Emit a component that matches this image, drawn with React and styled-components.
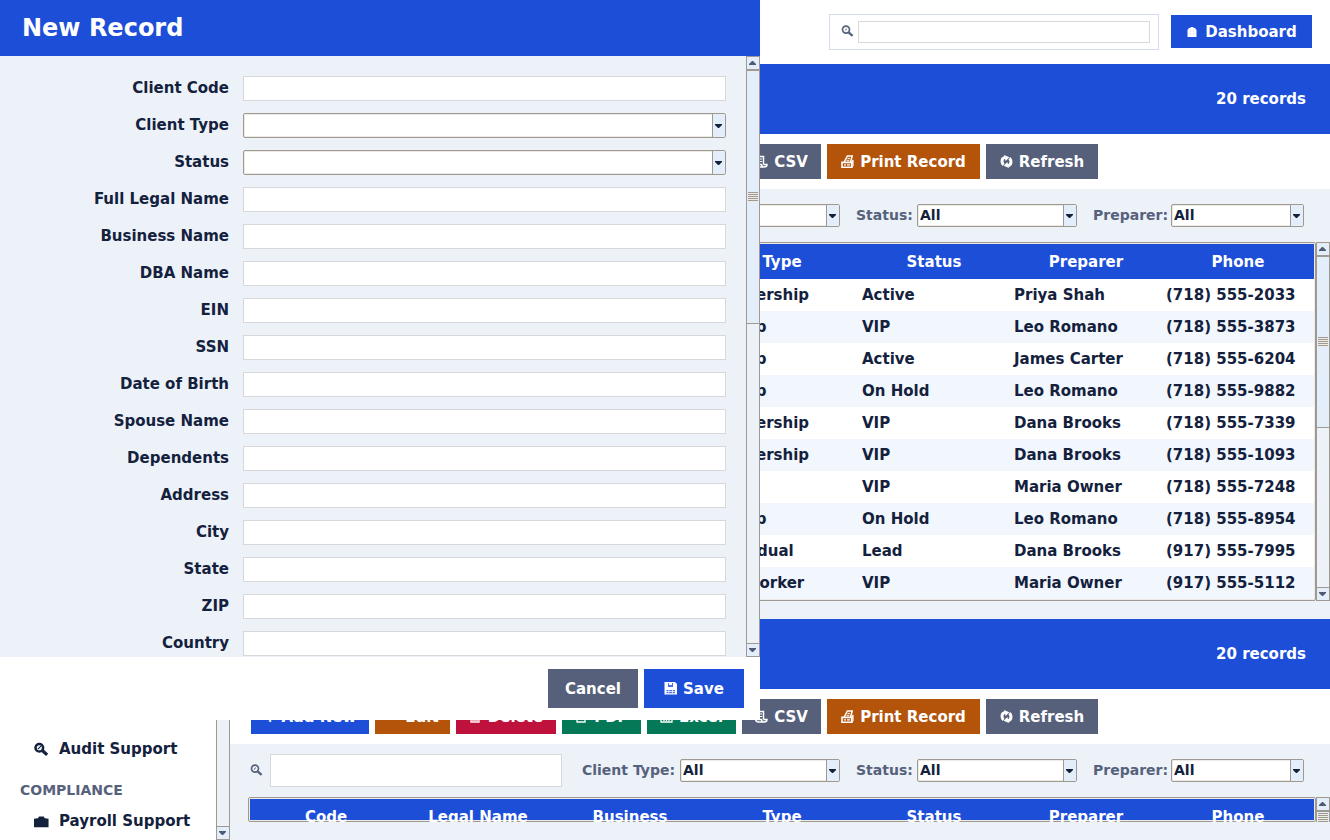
import React from 'react';
import styled, { createGlobalStyle, css } from 'styled-components';

const c = {
  blue: '#1d4ed8', slate: '#56607a', orange: '#b4530a', red: '#be123c', green: '#047857',
  pale: '#edf2f9', ink: '#14213d', muted: '#56617c', edge: '#9e9a91', light: '#eeebe7',
  field: '#d6d8dc', thumb: '#e4edfa', stripe: '#f2f6fd',
};

const Global = createGlobalStyle`
  *, *::before { box-sizing: border-box; }
  body { margin: 0; background: ${c.pale}; color: ${c.ink}; font: bold 15px/20px "DejaVu Sans", sans-serif; }
  button, input, select { font: inherit; color: inherit; margin: 0; border-radius: 0; }
`;

const Page = styled.div`
  display: flex;
  height: 100vh;
  overflow: hidden;
`;

const Sidebar = styled.nav`
  display: flex;
  width: 230px;
  flex: none;
  background: #fff;
`;
const NavList = styled.div`
  flex: 1;
  display: flex;
  flex-direction: column;
  justify-content: flex-end;
`;
const NavItem = styled.a`
  display: flex;
  align-items: center;
  gap: 10px;
  height: 38px;
  padding-left: 34px;
  color: inherit;
  text-decoration: none;
`;
const NavHeading = styled.div`
  padding: 12px 20px 2px;
  font-size: 14px;
  color: ${c.muted};
`;

const Main = styled.main`
  flex: 1;
  min-width: 0;
  display: flex;
  flex-direction: column;
`;
const TopBar = styled.header`
  flex: none;
  display: flex;
  align-items: center;
  justify-content: flex-end;
  gap: 12px;
  height: 64px;
  padding: 0 18px 1px 0;
  background: #fff;
`;
const SearchBox = styled.label`
  display: flex;
  align-items: center;
  gap: 4px;
  width: 330px;
  height: 36px;
  padding: 0 8px 0 11px;
  border: 1px solid #d5dcef;
  color: ${c.muted};
`;
const TextInput = styled.input`
  flex: 1;
  min-width: 0;
  height: ${(p) => p.$h || 25}px;
  padding: 0 4px;
  border: 1px solid ${c.field};
  background: #fff;
`;
const Button = styled.button`
  display: flex;
  align-items: center;
  justify-content: center;
  gap: 6px;
  height: ${(p) => p.$h || 35}px;
  width: ${(p) => p.$w}px;
  padding: 0;
  border: 0;
  background: ${(p) => c[p.$tone]};
  color: #fff;
  white-space: nowrap;
`;

const Section = styled.section`
  display: flex;
  flex-direction: column;
  flex: ${(p) => (p.$fill ? '1 1 0' : 'none')};
  min-height: 0;
  padding-bottom: 18px;
`;
const Banner = styled.div`
  flex: none;
  display: flex;
  align-items: center;
  justify-content: flex-end;
  height: 70px;
  padding-right: 24px;
  background: ${c.blue};
  color: #fff;
`;
const Toolbar = styled.div`
  flex: none;
  display: flex;
  gap: 6px;
  padding: 10px 21px;
  background: #fff;
`;
const Filters = styled.div`
  flex: none;
  display: flex;
  align-items: center;
  height: 53px;
  padding: 0 26px 0 20px;
  font-size: 14px;
  color: ${c.muted};
`;
const FilterSearch = styled.label`
  display: flex;
  align-items: center;
  gap: 7px;
  flex: 1;
`;
const Filter = styled.label`
  display: flex;
  align-items: center;
  margin-left: ${(p) => p.$gap || 16}px;
`;
const FilterName = styled.span`
  width: ${(p) => p.$w}px;
  padding-bottom: 2px;
  white-space: nowrap;
`;

const SelectFrame = styled.span`
  position: relative;
  display: flex;
  flex: ${(p) => (p.$w ? 'none' : '1')};
  width: ${(p) => (p.$w ? p.$w + 'px' : 'auto')};
  height: ${(p) => p.$h}px;
  border: 1px solid ${c.edge};
  border-radius: 2px;
  background: #fff;
  box-shadow: inset 0 0 0 1px ${c.light};
`;
const NativeSelect = styled.select`
  flex: 1;
  min-width: 0;
  appearance: none;
  border: 0;
  padding: 0 16px 2px 2px;
  background: transparent;
  color: ${c.ink};
`;
const SelectArrow = styled.span`
  position: absolute;
  right: 0;
  top: 0;
  bottom: 0;
  width: 13px;
  display: flex;
  align-items: center;
  justify-content: center;
  border-left: 1px solid ${c.edge};
  background: ${c.thumb};
  color: ${c.ink};
  pointer-events: none;
`;

const TableRow = styled.div`
  display: flex;
  flex: 1 1 auto;
  min-height: 0;
  padding-left: 18px;
`;
const TableFrame = styled.div`
  position: relative;
  flex: 1;
  min-width: 0;
  padding: 2px;
  overflow: hidden;
  &::before {
    content: '';
    position: absolute;
    inset: 0;
    z-index: 1;
    border: 1px solid ${c.edge};
    border-radius: 2px;
    box-shadow: inset 0 0 0 1px ${c.light};
    pointer-events: none;
  }
`;
const Table = styled.table`
  width: 100%;
  table-layout: fixed;
  border-collapse: collapse;
  background: #fff;
  white-space: nowrap;
`;
const Th = styled.th`
  height: 35px;
  padding: 0;
  background: ${c.blue};
  color: #fff;
  font-weight: bold;
  span { position: relative; z-index: 2; }
`;
const Tr = styled.tr`
  background: ${(p) => (p.$odd ? c.stripe : '#fff')};
`;
const Td = styled.td`
  height: 32px;
  padding: 0 0 0 4px;
`;

const Track = styled.div`
  flex: none;
  display: flex;
  flex-direction: column;
  width: 14px;
  overflow: hidden;
  border: 1px solid ${c.edge};
  border-top-width: ${(p) => (p.$openTop ? 0 : 1)}px;
  border-bottom-width: ${(p) => (p.$openBottom ? 0 : 1)}px;
  background: ${c.pale};
`;
const Arrow = styled.div`
  flex: none;
  display: flex;
  align-items: center;
  justify-content: center;
  height: 13px;
  background: ${c.thumb};
  color: #4d5a75;
  border: 0 solid ${c.edge};
  ${(p) => (p.$down ? css`border-top-width: 1px; margin-top: auto;` : css`border-bottom-width: 1px;`)}
`;
const Thumb = styled.div`
  flex: 0 1 ${(p) => p.$size};
  display: flex;
  align-items: center;
  min-height: ${(p) => p.$min || 0}px;
  border: solid ${c.edge};
  border-width: 1px 0;
  background: ${c.thumb};
`;
const Grip = styled.div`
  flex: 1;
  height: 10px;
  margin: 0 1px;
  background: repeating-linear-gradient(${c.edge} 0 1px, ${c.light} 1px 2px);
`;

const Dialog = styled.div`
  position: fixed;
  left: 0;
  top: 0;
  z-index: 10;
  display: flex;
  flex-direction: column;
  width: 760px;
  height: 720px;
  background: #fff;
`;
const DialogTitle = styled.h1`
  flex: none;
  margin: 0;
  padding: 0 22px;
  background: ${c.blue};
  color: #fff;
  font-size: 24px;
  line-height: 56px;
`;
const DialogBody = styled.div`
  flex: 1;
  min-height: 0;
  display: flex;
  background: ${c.pale};
`;
const Form = styled.form`
  flex: 1;
  display: flex;
  flex-direction: column;
  gap: 12px;
  overflow: hidden;
  padding: 20px 20px 0 0;
`;
const Field = styled.div`
  flex: none;
  display: flex;
  gap: 14px;
  height: 25px;
  label { width: 229px; text-align: right; line-height: 25px; }
`;
const DialogFooter = styled.div`
  flex: none;
  display: flex;
  justify-content: flex-end;
  gap: 6px;
  padding: 12px 16px;
`;

const Triangle = ({ up }) => (
  <svg width="8" height="4" viewBox="0 0 8 4" aria-hidden="true">
    <path d={up ? 'M0 4V3L3 0H4L7 3V4Z' : 'M0 0H7V1L4 4H3L0 1Z'} fill="currentColor" />
  </svg>
);

const glyphs = {
  search: (
    <g fill="none" stroke="currentColor">
      <circle cx="5" cy="4.6" r="3.5" strokeWidth="1.7" />
      <path d="M3.8 5.6L6 3.6" strokeWidth="1" />
      <path d="M7.6 7.4L11.6 10.9" strokeWidth="2.3" />
    </g>
  ),
  searchBold: (
    <g fill="none" stroke="currentColor">
      <circle cx="4.6" cy="5" r="3.3" strokeWidth="2.2" />
      <path d="M3.4 6.2L6 3.6" strokeWidth="1" />
      <path d="M7.4 7.6L11.4 11.2" strokeWidth="2.8" />
    </g>
  ),
  home: (
    <g>
      <path d="M1.5 5L3 3H4.5V2H7.5V3H9L10.5 5V12H1.5Z" fill="currentColor" />
      <path d="M4 5.5H5V6.5H4ZM7 5.5H8V6.5H7ZM4 8.5H5V9.5H4ZM7 8.5H8V9.5H7Z" fill={c.blue} opacity="0.3" />
    </g>
  ),
  csv: (
    <g fill="none" stroke="currentColor" strokeWidth="1.5">
      <path d="M2.5 9V1.5H8.5V9.5" />
      <path d="M0.7 9.5H6.5Q6.8 12 9 12H3Q0.7 12 0.7 9.5Z" />
      <path d="M9 12Q12 12 12 9.5H8.5" />
      <path d="M4.3 4H7M4.3 6.5H7" strokeWidth="1" />
    </g>
  ),
  print: (
    <g fill="none" stroke="currentColor">
      <path d="M3.2 7L6.4 1H11.2L9.6 7" strokeWidth="1.5" />
      <path d="M1 7.4H10.8V12.2H1Z" strokeWidth="1.6" />
      <path d="M11 7.4L12 5V10.5L10.8 12.2" strokeWidth="1.2" />
      <path d="M3 9.8H5M6 9.8H9.2" strokeWidth="1.3" />
      <path d="M6.6 3.4H9M5.6 5.3H8.4" strokeWidth="1" />
    </g>
  ),
  refresh: (
    <g fill="none" stroke="currentColor" strokeWidth="3">
      <path d="M5 2.4Q2 3 2 6.5Q2.1 8.6 3.6 9.8" />
      <path d="M8 10.8Q11 10 11 6.5Q10.9 4.4 9.3 3.2" />
      <path d="M4 0L9.4 2.3L5.6 6ZM9 13L3.6 10.7L7.4 7Z" fill="currentColor" stroke="none" />
    </g>
  ),
  save: (
    <g>
      <path d="M0.5 0H11L13 2V12.5H0.5Z" fill="currentColor" />
      <path d="M4 1H9V5H4ZM2.5 8H11V9.2H2.5ZM2.5 10H11V11.2H2.5Z" fill={c.blue} opacity="0.8" />
      <path d="M5 1H8V3H5ZM4.5 8H5.2V11.2H4.5ZM8 8H8.7V11.2H8Z" fill="currentColor" />
    </g>
  ),
  briefcase: (<path d="M0 4.2L3.4 3.6L4.4 2.2H8.4L9.4 3.6L12.6 4.2V11.4H0Z" fill="currentColor" />),
  trash: (<g fill="none" stroke="currentColor" strokeWidth="1.3"><path d="M1 2H11M2 3V12H10V3M4 4V11M6 4V11M8 4V11M2 6H10M2 9H10" /></g>),
  page: (<g fill="none" stroke="currentColor" strokeWidth="1.3"><path d="M2 1H10V12H2ZM4 4H8M4 7H8" /></g>),
  chart: (<g fill="none" stroke="currentColor" strokeWidth="1.3"><path d="M1 1H12V12H1ZM4 11V6M6.5 11V3M9 11V7" /></g>),
};
const Icon = ({ name, size = 13 }) => (
  <svg width={size} height={size} viewBox="0 0 13 13" aria-hidden="true">{glyphs[name]}</svg>
);

function Select({ id, options = [], w, h = 25 }) {
  return (
    <SelectFrame $w={w} $h={h}>
      <NativeSelect id={id}>{options.map((o) => <option key={o}>{o}</option>)}</NativeSelect>
      <SelectArrow><Triangle /></SelectArrow>
    </SelectFrame>
  );
}

function Scrollbar({ size, min, openTop, openBottom, thumb = true, down = true }) {
  return (
    <Track $openTop={openTop} $openBottom={openBottom}>
      {!openTop && <Arrow><Triangle up /></Arrow>}
      {thumb && <Thumb $size={size} $min={min}><Grip /></Thumb>}
      {down && <Arrow $down><Triangle /></Arrow>}
    </Track>
  );
}

const actions = [
  ['+ Add New', 'blue', 118],
  ['Edit', 'orange', 75, 'blank'],
  ['Delete', 'red', 100, 'trash'],
  ['PDF', 'green', 79, 'page'],
  ['Excel', 'green', 89, 'chart'],
  ['CSV', 'slate', 79, 'csv'],
  ['Print Record', 'orange', 153, 'print'],
  ['Refresh', 'slate', 112, 'refresh'],
];
const filters = [
  ['Client Type:', 98, 160, 20],
  ['Status:', 61, 160, 16],
  ['Preparer:', 78, 133, 16],
];
const columns = ['Code', 'Legal Name', 'Business', 'Type', 'Status', 'Preparer', 'Phone'];
const records = [
  ['Partnership', 'Active', 'Priya Shah', '(718) 555-2033'],
  ['S-Corp', 'VIP', 'Leo Romano', '(718) 555-3873'],
  ['S-Corp', 'Active', 'James Carter', '(718) 555-6204'],
  ['S-Corp', 'On Hold', 'Leo Romano', '(718) 555-9882'],
  ['Partnership', 'VIP', 'Dana Brooks', '(718) 555-7339'],
  ['Partnership', 'VIP', 'Dana Brooks', '(718) 555-1093'],
  ['', 'VIP', 'Maria Owner', '(718) 555-7248'],
  ['S-Corp', 'On Hold', 'Leo Romano', '(718) 555-8954'],
  ['Individual', 'Lead', 'Dana Brooks', '(917) 555-7995'],
  ['Gig Worker', 'VIP', 'Maria Owner', '(917) 555-5112'],
];

function RecordSection({ rows, fill }) {
  return (
    <Section $fill={fill}>
      <Banner>20 records</Banner>
      <Toolbar>
        {actions.map(([label, tone, w, icon]) => (
          <Button key={label} type="button" $tone={tone} $w={w}>{icon && <Icon name={icon} />}{label}</Button>
        ))}
      </Toolbar>
      <Filters>
        <FilterSearch>
          <Icon name="search" />
          <TextInput $h={33} aria-label="Search records" />
        </FilterSearch>
        {filters.map(([label, labelWidth, w, gap]) => (
          <Filter key={label} $gap={gap}>
            <FilterName $w={labelWidth}>{label}</FilterName>
            <Select w={w} h={23} options={['All']} />
          </Filter>
        ))}
      </Filters>
      <TableRow>
        <TableFrame>
          <Table>
            <thead><tr>{columns.map((h) => <Th key={h}><span>{h}</span></Th>)}</tr></thead>
            <tbody>
              {rows.map((r, i) => (
                <Tr key={i} $odd={i % 2}><Td /><Td /><Td />{r.map((v, j) => <Td key={j}>{v}</Td>)}</Tr>
              ))}
            </tbody>
          </Table>
        </TableFrame>
        {fill ? <Scrollbar size="172px" min={13} down={false} openBottom /> : <Scrollbar size="172px" />}
      </TableRow>
    </Section>
  );
}

const fields = ['Client Code', 'Client Type', 'Status', 'Full Legal Name', 'Business Name', 'DBA Name', 'EIN', 'SSN',
  'Date of Birth', 'Spouse Name', 'Dependents', 'Address', 'City', 'State', 'ZIP', 'Country'];

function NewRecord() {
  return (
    <Dialog role="dialog" aria-labelledby="dialog-title">
      <DialogTitle id="dialog-title">New Record</DialogTitle>
      <DialogBody>
        <Form id="record-form">
          {fields.map((f) => {
            const id = f.toLowerCase().replace(/ /g, '-');
            return (
              <Field key={f}>
                <label htmlFor={id}>{f}</label>
                {f === 'Client Type' || f === 'Status' ? <Select id={id} /> : <TextInput id={id} />}
              </Field>
            );
          })}
        </Form>
        <Scrollbar size="254px" />
      </DialogBody>
      <DialogFooter>
        <Button type="button" $tone="slate" $w={90} $h={39}>Cancel</Button>
        <Button type="submit" form="record-form" $tone="blue" $w={100} $h={39}><Icon name="save" />Save</Button>
      </DialogFooter>
    </Dialog>
  );
}

export default function App() {
  return (
    <>
      <Global />
      <Page>
        <Sidebar>
          <NavList>
            <NavItem href="#audit"><Icon name="searchBold" size={15} />Audit Support</NavItem>
            <NavHeading>COMPLIANCE</NavHeading>
            <NavItem href="#payroll"><Icon name="briefcase" size={15} />Payroll Support</NavItem>
          </NavList>
          <Scrollbar openTop thumb={false} />
        </Sidebar>
        <Main>
          <TopBar>
            <SearchBox><Icon name="search" /><TextInput $h={22} aria-label="Search" /></SearchBox>
            <Button type="button" $tone="blue" $w={141} $h={33}><Icon name="home" />Dashboard</Button>
          </TopBar>
          <RecordSection rows={records} />
          <RecordSection rows={[]} fill />
        </Main>
      </Page>
      <NewRecord />
    </>
  );
}
